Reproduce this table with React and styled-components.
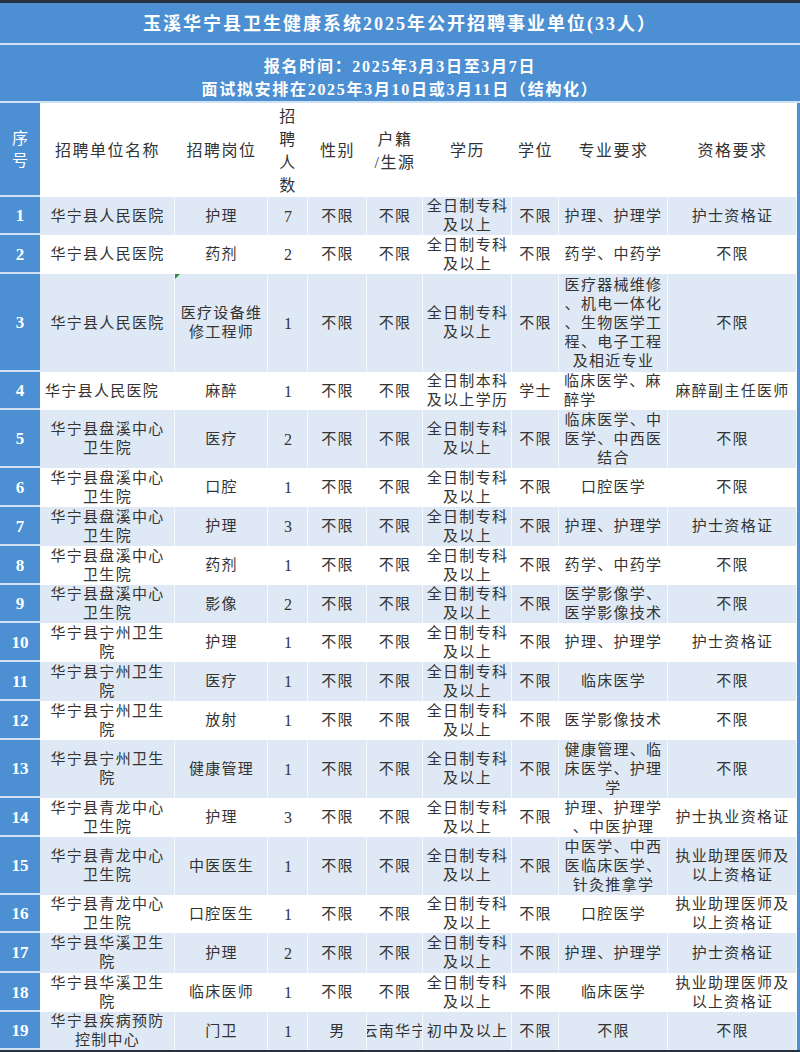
import React from 'react';
import styled, { createGlobalStyle, css } from 'styled-components';

const BLUE = '#4c8fd3';
const LIGHT = '#dee9f5';
const SEP = '#cfe1f4';
const DARK = '#27323e';

const Global = createGlobalStyle`
  html, body { margin: 0; padding: 0; background: #fff; }
  body { font-family: "Liberation Serif", "Noto Sans CJK SC", serif; }
  * { box-sizing: border-box; }
`;

const Page = styled.div`
  width: 800px;
  height: 1052px;
  display: flex;
  flex-direction: column;
  overflow: hidden;
  background: #fff;
  border-top: 3px solid ${DARK};
  border-bottom: 2px solid ${DARK};
`;

const TitleBar = styled.div`
  height: 42px;
  flex: none;
  background: ${BLUE};
  color: #fff;
  font-weight: 700;
  font-size: 18px;
  letter-spacing: 2px;
  line-height: 36px;
  padding-top: 3px;
  text-align: center;
  border-bottom: 2px solid ${SEP};
`;

const SubBar = styled.div`
  height: 58px;
  flex: none;
  background: ${BLUE};
  color: #fff;
  font-weight: 700;
  font-size: 16px;
  letter-spacing: 1.7px;
  line-height: 23px;
  text-align: center;
  padding-top: 10px;
  border-bottom: 2px solid ${SEP};
`;

const Table = styled.div`
  display: flex;
  flex-direction: column;
  border-right: 3px solid ${BLUE};
  flex: 1;
`;

const Row = styled.div`
  display: grid;
  grid-template-columns: 40px 135px 93px 40px 59px 56px 89px 47px 109px 129px;
  height: ${(p) => p.$h}px;
  background: ${(p) => (p.$light ? LIGHT : '#fff')};
`;

const Index = styled.div`
  background: ${BLUE};
  color: #fff;
  display: flex;
  flex-direction: column;
  align-items: center;
  justify-content: center;
  border-bottom: 2px solid ${SEP};
  font-weight: ${(p) => (p.$head ? 400 : 700)};
  font-size: ${(p) => (p.$head ? 16 : 17)}px;
  line-height: 22px;
  padding-top: 2px;
`;

const Cell = styled.div`
  position: relative;
  display: flex;
  flex-direction: column;
  justify-content: center;
  align-items: ${(p) => (p.$align === 'left' ? 'flex-start' : 'center')};
  padding: ${(p) => (p.$align === 'left' ? '0 0 0 5px' : '0 0 0 1px')};
  border-right: 1px solid rgba(255, 255, 255, 0.75);
  color: #333;
  font-size: 15px;
  letter-spacing: 1.3px;
  line-height: 19px;
  overflow: ${(p) => (p.$clip ? 'hidden' : 'visible')};
  ${(p) =>
    p.$num &&
    css`
      font-size: 16px;
      letter-spacing: 0;
    `}
  ${(p) =>
    p.$mark &&
    css`
      &::before {
        content: '';
        position: absolute;
        left: 0;
        top: 0;
        border-top: 5px solid #2e8b3a;
        border-right: 5px solid transparent;
      }
    `}
`;

const HeadCell = styled.div`
  display: flex;
  flex-direction: column;
  justify-content: center;
  align-items: center;
  color: #333;
  font-size: 16px;
  letter-spacing: 1.5px;
  line-height: ${(p) => (p.$tight ? 23 : 22)}px;
  padding-top: 2px;
`;

const Line = styled.span`
  display: block;
  white-space: nowrap;
`;

const lines = (s) => s.split('|').map((t, i) => <Line key={i}>{t}</Line>);

const rows = [
  { h: 38, name: '华宁县人民医院', post: '护理', n: '7', hj: '不限', edu: '全日制专科|及以上', deg: '不限', major: '护理、护理学', qual: '护士资格证' },
  { h: 39, name: '华宁县人民医院', post: '药剂', n: '2', hj: '不限', edu: '全日制专科|及以上', deg: '不限', major: '药学、中药学', qual: '不限' },
  { h: 98, name: '华宁县人民医院', post: '医疗设备维|修工程师', mark: true, n: '1', hj: '不限', edu: '全日制专科|及以上', deg: '不限', major: '医疗器械维修|、机电一体化|、生物医学工|程、电子工程|及相近专业', qual: '不限' },
  { h: 38, name: '华宁县人民医院', left: true, post: '麻醉', n: '1', hj: '不限', edu: '全日制本科|及以上学历', deg: '学士', major: '临床医学、麻|醉学', qual: '麻醉副主任医师' },
  { h: 58, name: '华宁县盘溪中心|卫生院', post: '医疗', n: '2', hj: '不限', edu: '全日制专科|及以上', deg: '不限', major: '临床医学、中|医学、中西医|结合', qual: '不限' },
  { h: 39, name: '华宁县盘溪中心|卫生院', post: '口腔', n: '1', hj: '不限', edu: '全日制专科|及以上', deg: '不限', major: '口腔医学', qual: '不限' },
  { h: 39, name: '华宁县盘溪中心|卫生院', post: '护理', n: '3', hj: '不限', edu: '全日制专科|及以上', deg: '不限', major: '护理、护理学', qual: '护士资格证' },
  { h: 39, name: '华宁县盘溪中心|卫生院', post: '药剂', n: '1', hj: '不限', edu: '全日制专科|及以上', deg: '不限', major: '药学、中药学', qual: '不限' },
  { h: 38, name: '华宁县盘溪中心|卫生院', post: '影像', n: '2', hj: '不限', edu: '全日制专科|及以上', deg: '不限', major: '医学影像学、|医学影像技术', qual: '不限' },
  { h: 39, name: '华宁县宁州卫生|院', post: '护理', n: '1', hj: '不限', edu: '全日制专科|及以上', deg: '不限', major: '护理、护理学', qual: '护士资格证' },
  { h: 39, name: '华宁县宁州卫生|院', post: '医疗', n: '1', hj: '不限', edu: '全日制专科|及以上', deg: '不限', major: '临床医学', qual: '不限' },
  { h: 39, name: '华宁县宁州卫生|院', post: '放射', n: '1', hj: '不限', edu: '全日制专科|及以上', deg: '不限', major: '医学影像技术', qual: '不限' },
  { h: 58, name: '华宁县宁州卫生|院', post: '健康管理', n: '1', hj: '不限', edu: '全日制专科|及以上', deg: '不限', major: '健康管理、临|床医学、护理|学', qual: '不限' },
  { h: 39, name: '华宁县青龙中心|卫生院', post: '护理', n: '3', hj: '不限', edu: '全日制专科|及以上', deg: '不限', major: '护理、护理学|、中医护理', qual: '护士执业资格证' },
  { h: 58, name: '华宁县青龙中心|卫生院', post: '中医医生', n: '1', hj: '不限', edu: '全日制专科|及以上', deg: '不限', major: '中医学、中西|医临床医学、|针灸推拿学', qual: '执业助理医师及|以上资格证' },
  { h: 38, name: '华宁县青龙中心|卫生院', post: '口腔医生', n: '1', hj: '不限', edu: '全日制专科|及以上', deg: '不限', major: '口腔医学', qual: '执业助理医师及|以上资格证' },
  { h: 40, name: '华宁县华溪卫生|院', post: '护理', n: '2', hj: '不限', edu: '全日制专科|及以上', deg: '不限', major: '护理、护理学', qual: '护士资格证' },
  { h: 39, name: '华宁县华溪卫生|院', post: '临床医师', n: '1', hj: '不限', edu: '全日制专科|及以上', deg: '不限', major: '临床医学', qual: '执业助理医师及|以上资格证' },
  { h: 38, name: '华宁县疾病预防|控制中心', post: '门卫', n: '1', sex: '男', hj: '云南华宁', edu: '初中及以上', deg: '不限', major: '不限', qual: '不限' },
];

export default function App() {
  return (
    <Page>
      <Global />
      <TitleBar>玉溪华宁县卫生健康系统2025年公开招聘事业单位(33人）</TitleBar>
      <SubBar>
        <Line>报名时间：2025年3月3日至3月7日</Line>
        <Line>面试拟安排在2025年3月10日或3月11日（结构化）</Line>
      </SubBar>
      <Table>
        <Row $h={94}>
          <Index $head>
            <Line>序</Line>
            <Line>号</Line>
          </Index>
          <HeadCell>招聘单位名称</HeadCell>
          <HeadCell>招聘岗位</HeadCell>
          <HeadCell $tight>{lines('招|聘|人|数')}</HeadCell>
          <HeadCell>性别</HeadCell>
          <HeadCell $tight>{lines('户籍|/生源')}</HeadCell>
          <HeadCell>学历</HeadCell>
          <HeadCell>学位</HeadCell>
          <HeadCell>专业要求</HeadCell>
          <HeadCell>资格要求</HeadCell>
        </Row>
        {rows.map((r, i) => (
          <Row key={i} $h={r.h} $light={i % 2 === 0}>
            <Index>{i + 1}</Index>
            <Cell $align={r.left ? 'left' : 'center'}>{lines(r.name)}</Cell>
            <Cell $mark={r.mark}>{lines(r.post)}</Cell>
            <Cell $num>{r.n}</Cell>
            <Cell>{r.sex || '不限'}</Cell>
            <Cell $clip>{lines(r.hj)}</Cell>
            <Cell>{lines(r.edu)}</Cell>
            <Cell>{lines(r.deg)}</Cell>
            <Cell $align={r.left ? 'left' : 'center'}>{lines(r.major)}</Cell>
            <Cell>{lines(r.qual)}</Cell>
          </Row>
        ))}
      </Table>
    </Page>
  );
}
